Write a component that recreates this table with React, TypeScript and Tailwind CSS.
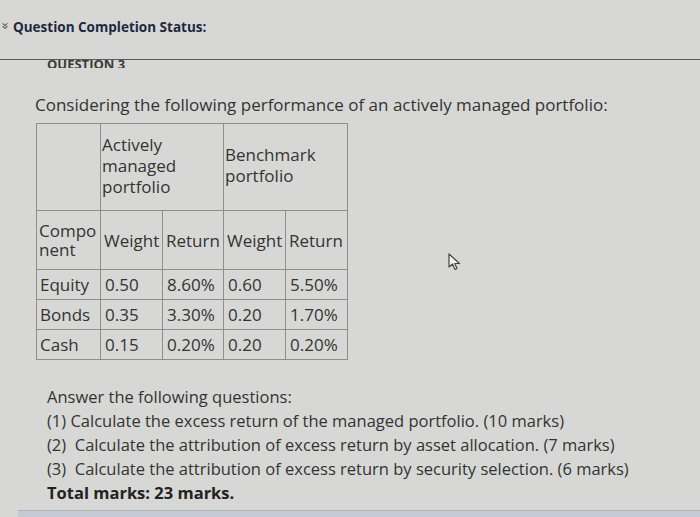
import { ChevronsDown } from "lucide-react";

const rows = [
  ["Equity", "0.50", "8.60%", "0.60", "5.50%"],
  ["Bonds", "0.35", "3.30%", "0.20", "1.70%"],
  ["Cash", "0.15", "0.20%", "0.20", "0.20%"],
];

const cell = "border-[1.5px] border-[#8e8f8d] px-[3px] align-middle";

export default function App() {
  return (
    <div className="w-[700px] h-[517px] overflow-hidden bg-[#d7d8d5] font-['Open_Sans',sans-serif] text-[#333] flex flex-col">
      <div className="h-[60px] flex items-start pt-[17px] border-b border-[#5a5a5a]">
        <ChevronsDown className="w-[10px] h-[10px] mt-[4px] text-[#555]" strokeWidth={2.5} />
        <span className="ml-[3px] text-[13.5px] font-bold text-[#1f2740]">Question Completion Status:</span>
      </div>
      <div className="h-[8px] overflow-hidden pl-[47px]">
        <div className="text-[13px] font-bold leading-[14px] text-[#3a3a3a] -mt-[3px]">QUESTION 3</div>
      </div>
      <p className="mt-[25px] pl-[35px] text-[17px] leading-[24px]">
        Considering the following performance of an actively managed portfolio:
      </p>
      <table className="ml-[36px] mt-[6px] border-collapse text-[17px] leading-[21px] w-[311px] table-fixed">
        <colgroup>
          <col className="w-[64px]" />
          <col className="w-[62px]" />
          <col className="w-[61px]" />
          <col className="w-[62px]" />
          <col className="w-[62px]" />
        </colgroup>
        <tbody>
          <tr className="h-[87px]">
            <td className={cell}></td>
            <td colSpan={2} className={`${cell} align-top pt-[10px] !pl-[1px]`}>
              Actively<br />managed<br />portfolio
            </td>
            <td colSpan={2} className={`${cell} align-top pt-[20px] !pl-[1px]`}>
              Benchmark<br />portfolio
            </td>
          </tr>
          <tr className="h-[59px]">
            <td className={`${cell} leading-[19px] !pl-[2px]`}>Compo<br />nent</td>
            <td className={cell}>Weight</td>
            <td className={cell}>Return</td>
            <td className={cell}>Weight</td>
            <td className={cell}>Return</td>
          </tr>
          {rows.map((r) => (
            <tr key={r[0]} className="h-[30px]">
              {r.map((v, i) => (
                <td key={i} className={`${cell} ${i > 0 ? "pl-[4px]" : ""}`}>{v}</td>
              ))}
            </tr>
          ))}
        </tbody>
      </table>
      <div className="relative flex-1">
        <svg className="absolute left-[448px] top-[-107px]" width="14" height="18" viewBox="0 0 14 18">
          <path d="M1 1 L1 14 L4.5 11 L7 16.5 L9 15.5 L6.8 10.5 L11.5 10.5 Z" fill="#f2f2f2" stroke="#444" strokeWidth="1.2" strokeLinejoin="round" />
        </svg>
        <div className="pl-[47px] pt-[25px] text-[16.5px] leading-[24px]">
          <p>Answer the following questions:</p>
          <p>(1) Calculate the excess return of the managed portfolio. (10 marks)</p>
          <p>(2)&nbsp; Calculate the attribution of excess return by asset allocation. (7 marks)</p>
          <p>(3)&nbsp; Calculate the attribution of excess return by security selection. (6 marks)</p>
          <p className="font-bold text-[#222]">Total marks: 23 marks.</p>
        </div>
        <div className="absolute left-[18px] right-0 bottom-0 h-[7px] bg-[#c3cad3] border-t border-[#aab2bd]" />
      </div>
    </div>
  );
}
